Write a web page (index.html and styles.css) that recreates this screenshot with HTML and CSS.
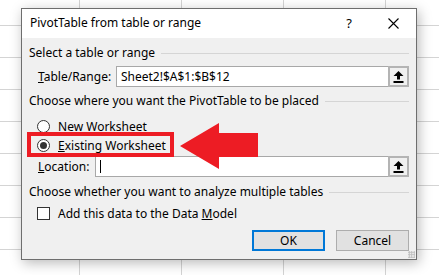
FILE: index.html
```html
<!DOCTYPE html>
<html>
<head>
<meta charset="utf-8">
<link rel="stylesheet" href="styles.css">
</head>
<body>
<div class="sheet">
  <div class="dialog">
    <div class="titlebar">
      <span class="title">PivotTable from table or range</span>
      <span class="help">?</span>
      <svg class="close" width="11" height="11" viewBox="0 0 11 11"><path d="M0.5 0.5 L10.5 10.5 M10.5 0.5 L0.5 10.5" stroke="#000" stroke-width="1.1"/></svg>
    </div>
    <div class="content">
      <div class="group-head"><span>Select a table or range</span><i class="rule"></i></div>
      <div class="field-row first">
        <span class="label label-wide"><u>T</u>able/Range:</span>
        <div class="input"><span class="value">Sheet2!$A$1:$B$12</span>
          <span class="pick"><svg width="11" height="12" viewBox="0 0 11 12"><path d="M5.5 0 L10.5 5 L7 5 L7 8.5 L4 8.5 L4 5 L0.5 5 Z" fill="#000"/><rect x="0.5" y="10" width="10" height="2" fill="#000"/></svg></span>
        </div>
      </div>
      <div class="group-head second"><span>Choose where you want the PivotTable to be placed</span><i class="rule"></i></div>
      <div class="radio-row top"><span class="radio"></span><span><u>N</u>ew Worksheet</span></div>
      <div class="radio-row"><span class="radio checked"></span><span><u>E</u>xisting Worksheet</span></div>
      <div class="field-row loc">
        <span class="label label-narrow"><u>L</u>ocation:</span>
        <div class="input"><span class="caret"></span>
          <span class="pick"><svg width="11" height="12" viewBox="0 0 11 12"><path d="M5.5 0 L10.5 5 L7 5 L7 8.5 L4 8.5 L4 5 L0.5 5 Z" fill="#000"/><rect x="0.5" y="10" width="10" height="2" fill="#000"/></svg></span>
        </div>
      </div>
      <div class="group-head third"><span>Choose whether you want to analyze multiple tables</span><i class="rule"></i></div>
      <div class="check-row"><span class="checkbox"></span><span>Add this data to the Data <u>M</u>odel</span></div>
      <div class="buttons">
        <button class="btn default">OK</button>
        <button class="btn">Cancel</button>
      </div>
    </div>
    <span class="grip"></span>
    <div class="highlight"></div>
    <svg class="arrow" width="79" height="47" viewBox="0 0 79 47"><path d="M0 23 L39 0 L39 10 L78 10 L78 34 L39 34 L39 46 Z" fill="#ed1c24"/></svg>
  </div>
</div>
</body>
</html>
```

FILE: styles.css
```css
* { box-sizing: border-box; }
html, body { margin: 0; padding: 0; }
body {
  width: 439px;
  height: 275px;
  overflow: hidden;
  font-family: "Noto Sans", "Open Sans", sans-serif;
  font-size: 12px;
  color: #000;
}
.sheet {
  width: 439px;
  height: 275px;
  padding: 8px 0 0 21px;
  background-color: #fff;
  background-image:
    linear-gradient(to right, #d4d4d4 1px, transparent 1px),
    linear-gradient(to bottom, #d4d4d4 1px, transparent 1px);
  background-size: 102px 32px;
  background-position: 79px 25px;
}
.dialog {
  position: relative;
  width: 396px;
  height: 252px;
  border: 1px solid #6e6e6e;
  background: #f0f0f0;
  box-shadow: 2px 3px 12px rgba(0,0,0,0.28);
  display: flex;
  flex-direction: column;
}
.titlebar {
  height: 29px;
  background: #fff;
  display: flex;
  align-items: center;
  padding: 0 0 1px 8px;
}
.title { flex: 1; line-height: 16px; }
.help { width: 12px; margin-right: 33px; font-size: 13px; text-align: center; }
.close { margin-right: 17px; }
.content {
  flex: 1;
  padding: 7px 7px 0 7px;
  display: flex;
  flex-direction: column;
}
.group-head {
  display: flex;
  align-items: center;
  height: 16px;
  line-height: 16px;
}
.group-head .rule {
  flex: 1;
  height: 1px;
  background: #d5d5d5;
  margin-left: 6px;
}
.group-head.second { margin-top: 6px; }
.group-head.third { margin-top: 7px; }
.field-row {
  display: flex;
  align-items: center;
  height: 21px;
  padding-left: 9px;
}
.field-row.first { margin-top: 5px; }
.field-row.loc { margin-top: 1px; }
.label-wide { width: 78px; }
.label-narrow { width: 57px; }
.input {
  flex: 1;
  height: 21px;
  background: #fff;
  border: 1px solid #a8a8a8;
  display: flex;
  align-items: center;
  padding-left: 4px;
}
.value { flex: 1; }
.caret { width: 1px; height: 13px; background: #000; margin-right: auto; }
.pick {
  width: 21px;
  height: 21px;
  margin: -1px -1px -1px 0;
  border: 2px solid #b4b4b4;
  background: #f0f0f0;
  display: flex;
  align-items: center;
  justify-content: center;
}
.radio-row, .check-row {
  display: flex;
  align-items: center;
  padding-left: 8px;
  height: 19px;
}
.radio-row.top { margin-top: 8px; }
.radio {
  width: 13px;
  height: 13px;
  border: 1px solid #333;
  border-radius: 50%;
  background: #fff;
  margin-right: 8px;
  display: flex;
  align-items: center;
  justify-content: center;
}
.radio.checked::after {
  content: "";
  width: 7px;
  height: 7px;
  border-radius: 50%;
  background: #333;
}
.check-row { margin-top: 5px; height: 16px; }
.checkbox {
  width: 13px;
  height: 13px;
  border: 1px solid #333;
  background: #fff;
  margin-right: 8px;
}
.buttons {
  display: flex;
  justify-content: flex-end;
  gap: 11px;
  margin-top: 9px;
}
.btn {
  font: inherit;
  width: 73px;
  height: 21px;
  padding: 0;
  background: #e1e1e1;
  border: 1px solid #adadad;
  color: #000;
}
.btn.default { border: 2px solid #0078d7; }
.grip {
  position: absolute;
  right: 1px;
  bottom: 1px;
  width: 7px;
  height: 7px;
  background-image: radial-gradient(circle, #bdbdbd 1px, transparent 1.2px);
  background-size: 2.5px 2.5px;
}
.highlight {
  position: absolute;
  left: 5px;
  top: 123px;
  width: 147px;
  height: 25px;
  border: 4px solid #ed1c24;
}
.arrow {
  position: absolute;
  left: 158px;
  top: 114px;
}
```
